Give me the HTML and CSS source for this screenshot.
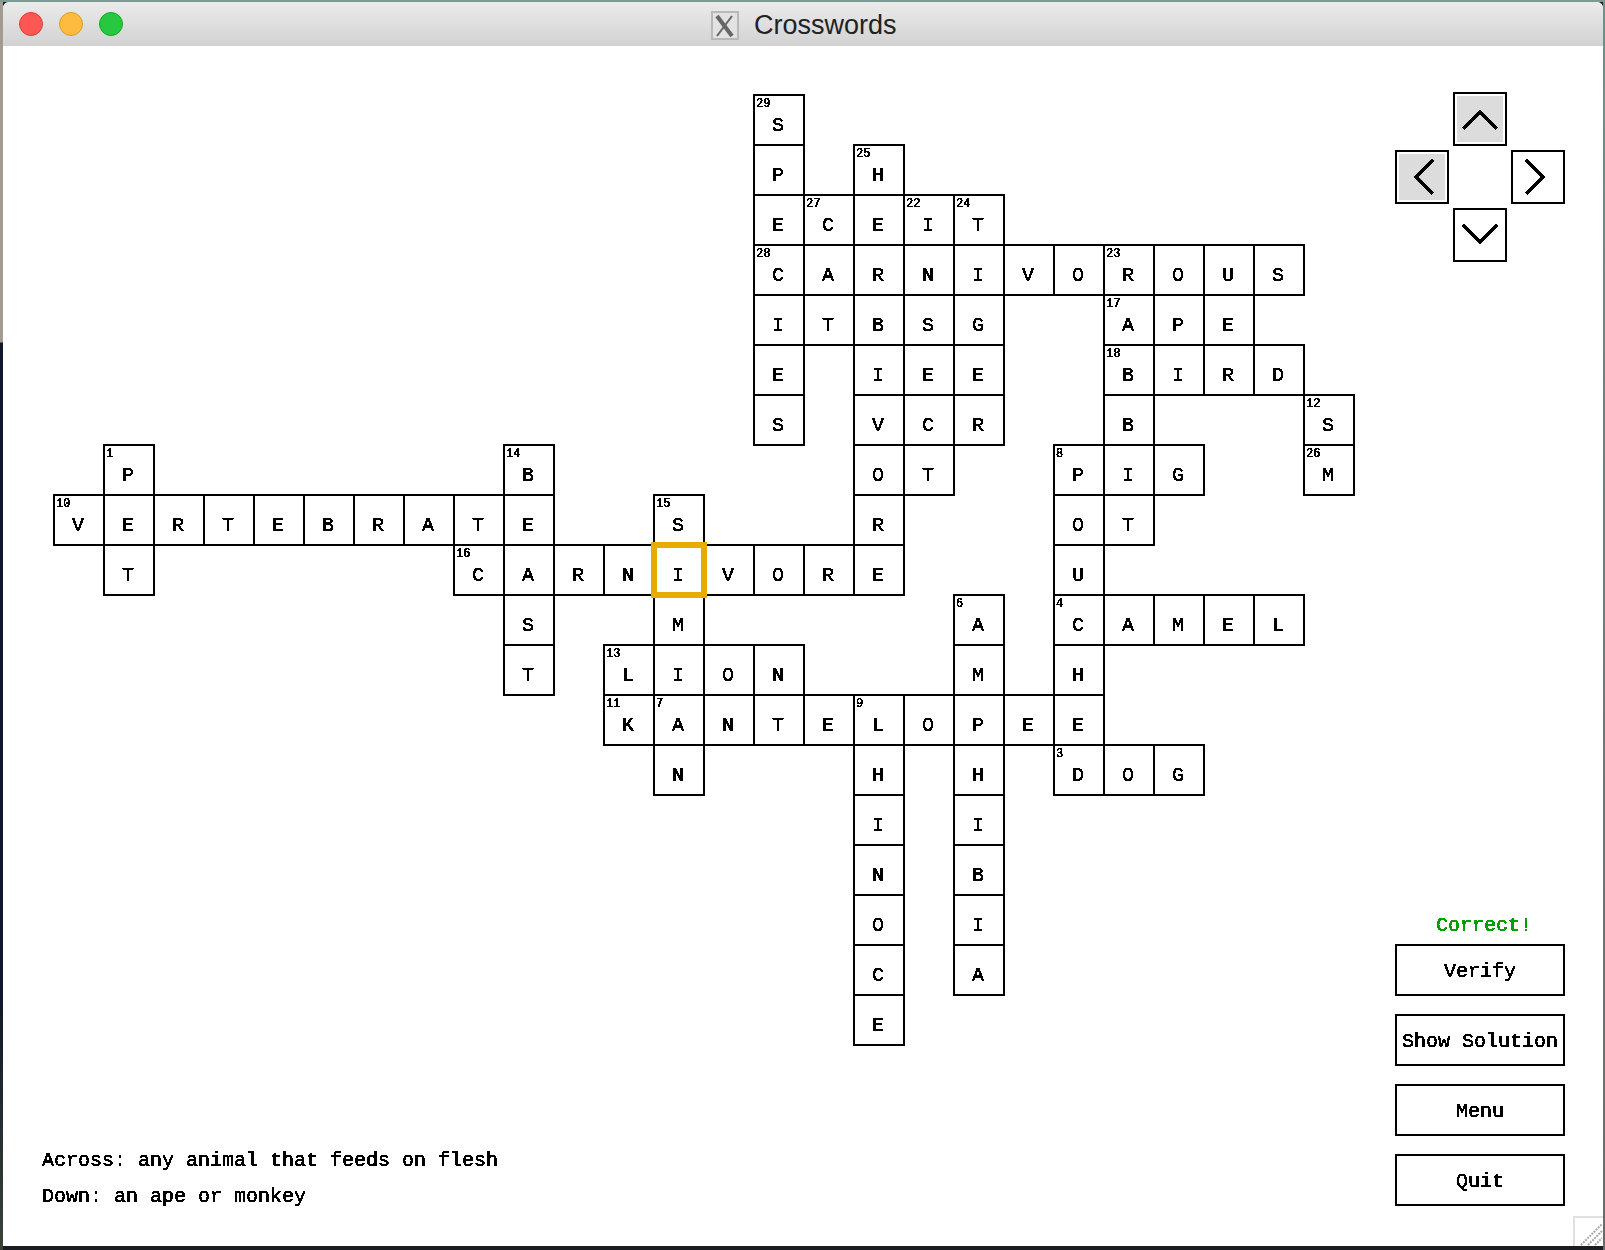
FILE: index.html
```html
<!DOCTYPE html>
<html lang="en">
<head>
  <meta charset="UTF-8">
  <title>Crosswords</title>
  <link rel="stylesheet" href="styles.css">
</head>

<body>
  <svg class="defs" width="0" height="0">
    <filter id="crisp" x="0" y="0" width="100%" height="100%">
      <feComponentTransfer>
        <feFuncA type="discrete" tableValues="0 1"/>
      </feComponentTransfer>
    </filter>
  </svg>

  <div class="window">
    <div class="titlebar">
      <div class="lights">
        <span class="light red"></span>
        <span class="light yellow"></span>
        <span class="light green"></span>
      </div>
      <div class="title">
        <svg class="x-icon" width="28" height="29" viewBox="0 0 28 29">
          <rect x="1" y="1" width="26" height="27" fill="#e2e2e2" stroke="#b8b8b8" stroke-width="2"/>
          <path class="x-thick" d="M6 5 L21 25"/>
          <path class="x-thin" d="M21 5 L6 25"/>
        </svg>
        <span>Crosswords</span>
      </div>
    </div>

    <div class="content">
      <div class="main">
        <div class="board" id="board"></div>
        <div class="clues px">
          <div>Across: any animal that feeds on flesh</div>
          <div>Down: an ape or monkey</div>
        </div>
      </div>

      <div class="side">
        <div class="dpad">
          <button class="arrow up active">
            <svg width="36" height="20" viewBox="0 0 36 20"><path d="M1 19 L18 2 L35 19"/></svg>
          </button>
          <button class="arrow left active">
            <svg width="20" height="36" viewBox="0 0 20 36"><path d="M19 1 L2 18 L19 35"/></svg>
          </button>
          <button class="arrow right">
            <svg width="20" height="36" viewBox="0 0 20 36"><path d="M1 1 L18 18 L1 35"/></svg>
          </button>
          <button class="arrow down">
            <svg width="36" height="20" viewBox="0 0 36 20"><path d="M1 1 L18 18 L35 1"/></svg>
          </button>
        </div>

        <div class="actions">
          <div class="status px">Correct!</div>
          <button class="action"><span class="px">Verify</span></button>
          <button class="action"><span class="px">Show Solution</span></button>
          <button class="action"><span class="px">Menu</span></button>
          <button class="action"><span class="px">Quit</span></button>
        </div>
      </div>

      <div class="grip">
        <svg width="24" height="24" viewBox="0 0 24 24">
          <path d="M2 23 L23 2 M9 23 L23 9 M16 23 L23 16"/>
        </svg>
      </div>
    </div>
  </div>

  <script>
    // one string per row, a dot is an empty square
    const rows = [
      "..............S",
      "..............P.H",
      "..............ECEIT",
      "..............CARNIVOROUS",
      "..............ITBSG..APE",
      "..............E.IEE..BIRD",
      "..............S.VCR..B...S",
      ".P.......B......OT..PIG..M",
      "VERTEBRATE..S...R...OT",
      ".T......CARNIVORE...U",
      ".........S..M.....A.CAMEL",
      ".........T.LION...M.H",
      "...........KANTELOPEE",
      "............N...H.H.DOG",
      "................I.I",
      "................N.B",
      "................O.I",
      "................C.A",
      "................E"
    ];

    // clue numbers, keyed by row,col
    const numbers = {
      "0,14": 29, "1,16": 25, "2,15": 27, "2,17": 22, "2,18": 24, "3,14": 28,
      "3,21": 23, "4,21": 17, "5,21": 18, "6,25": 12, "7,1": 1, "7,9": 14,
      "7,20": 8, "7,25": 26, "8,0": 10, "8,12": 15, "9,8": 16, "10,18": 6,
      "10,20": 4, "11,11": 13, "12,11": 11, "12,12": 7, "12,16": 9, "13,20": 3
    };

    const board = document.getElementById('board');

    rows.forEach((row, r) => {
      [...row].forEach((letter, c) => {
        if (letter === '.') return;

        const cell = document.createElement('div');
        cell.className = 'cell';
        cell.style.gridRow = r + 1;
        cell.style.gridColumn = c + 1;
        if (r === 9 && c === 12) cell.classList.add('selected');

        const num = numbers[r + ',' + c];
        if (num) {
          const small = document.createElement('span');
          small.className = 'num px';
          small.textContent = num;
          cell.appendChild(small);
        }

        const big = document.createElement('span');
        big.className = 'letter px';
        big.textContent = letter;
        cell.appendChild(big);

        board.appendChild(cell);
      });
    });
  </script>
</body>
</html>
```

FILE: styles.css
```css
html, body {
  margin: 0;
  height: 100%;
}
body {
  width: 1605px;
  height: 1250px;
  overflow: hidden;
  box-sizing: border-box;
  padding: 2px 2px 4px 3px;
  background-color: #1a1e22;
  background-image:
    linear-gradient(#7d9a93, #7d9a93),
    linear-gradient(#a09c92 0, #a09c92 342px, #14172a 343px, #14172a 1000px, #3a4238 100%),
    linear-gradient(#6f8f88 0, #6a6a6a 100%);
  background-size: 100% 2px, 3px 100%, 2px 100%;
  background-position: 0 0, 0 0, 100% 0;
  background-repeat: no-repeat;
  font-family: "Liberation Mono", monospace;
}
.defs {
  position: absolute;
}
.px {
  filter: url(#crisp);
  color: #000;
  -webkit-text-stroke: 0.5px currentColor;
}

/* window */
.window {
  height: 100%;
  background: #fff;
  border-radius: 6px 6px 0 0;
  display: flex;
  flex-direction: column;
  overflow: hidden;
}
.titlebar {
  height: 44px;
  flex: none;
  background: linear-gradient(180deg, #ebebeb, #d2d2d2);
  display: flex;
  align-items: center;
  position: relative;
}
.lights {
  display: flex;
  gap: 16px;
  padding-left: 16px;
}
.light {
  width: 24px;
  height: 24px;
  box-sizing: border-box;
  border-radius: 50%;
  border: 1px solid;
}
.red { background: #fc5753; border-color: #df3d39; }
.yellow { background: #fdbc40; border-color: #dc9e1e; }
.green { background: #27c840; border-color: #12a925; }

.title {
  position: absolute;
  left: 708px;
  top: 8px;
  display: flex;
  align-items: center;
  gap: 15px;
  font-family: "Liberation Sans", sans-serif;
  font-size: 27px;
  line-height: 30px;
  color: #222;
}
.x-icon path {
  fill: none;
  stroke: #666;
}
.x-thick { stroke-width: 4; }
.x-thin { stroke-width: 2; }

/* the game area */
.content {
  flex: 1;
  position: relative;
  display: flex;
  gap: 30px;
  padding: 46px 38px 40px 50px;
  min-height: 0;
}
.main {
  flex: 1;
  display: flex;
  flex-direction: column;
  justify-content: space-between;
  padding-top: 2px;
  margin-bottom: -9px;
}
.board {
  display: grid;
  grid-template-columns: repeat(26, 50px);
  grid-auto-rows: 50px;
}
.cell {
  position: relative;
  width: 52px;
  height: 52px;
  box-sizing: border-box;
  border: 2px solid #000;
  background: #fff;
  display: flex;
  align-items: center;
  justify-content: center;
}
.letter {
  font-size: 20px;
  line-height: 24px;
  margin: 12px 0 0 -2px;
}
.num {
  position: absolute;
  left: 1px;
  top: 2px;
  font-family: "Liberation Mono", monospace;
  font-size: 12px;
  line-height: 12px;
}
.selected {
  z-index: 2;
}
.selected::after {
  content: "";
  position: absolute;
  inset: -4px;
  border: 6px solid #e6ac00;
}

.clues {
  margin-left: -11px;
  font-size: 20px;
  line-height: 36px;
}

/* arrows */
.side {
  flex: none;
  width: 170px;
  display: flex;
  flex-direction: column;
  justify-content: space-between;
}
.dpad {
  display: grid;
  grid-template-columns: 54px 54px 54px;
  grid-template-rows: 54px 54px 54px;
  gap: 4px;
}
.arrow {
  width: 54px;
  height: 54px;
  padding: 0;
  background: #fff;
  border: 2px solid #000;
  display: flex;
  align-items: center;
  justify-content: center;
}
.arrow svg {
  display: block;
  shape-rendering: crispEdges;
}
.arrow path {
  fill: none;
  stroke: #000;
  stroke-width: 3.4;
}
.arrow.active {
  background: #dcdcdc;
  outline: 2px solid #fff;
  outline-offset: -4px;
}
.up { grid-column: 2; grid-row: 1; }
.left { grid-column: 1; grid-row: 2; }
.right { grid-column: 3; grid-row: 2; }
.down { grid-column: 2; grid-row: 3; }
.up svg { margin-top: 2px; }
.left svg { margin-left: 3px; }
.right svg { margin-right: 6px; }
.down svg { margin-bottom: 2px; }

/* buttons */
.actions {
  display: flex;
  flex-direction: column;
  gap: 18px;
}
.action {
  width: 170px;
  height: 52px;
  padding: 3px 0 0;
  background: #fff;
  border: 2px solid #000;
  font-family: "Liberation Mono", monospace;
  font-size: 20px;
  color: #000;
}
.status {
  color: #00a000;
  font-size: 20px;
  line-height: 24px;
  text-align: center;
  padding-left: 8px;
  margin-bottom: -12px;
}

.grip {
  position: absolute;
  right: 0;
  bottom: 0;
  width: 30px;
  height: 30px;
  box-sizing: border-box;
  border: 2px solid #e0e0e0;
  border-right: 0;
  border-bottom: 0;
  display: flex;
  align-items: flex-end;
  justify-content: flex-end;
}
.grip path {
  fill: none;
  stroke: #a8a8a8;
  stroke-width: 2;
  stroke-dasharray: 2 1;
}
```
